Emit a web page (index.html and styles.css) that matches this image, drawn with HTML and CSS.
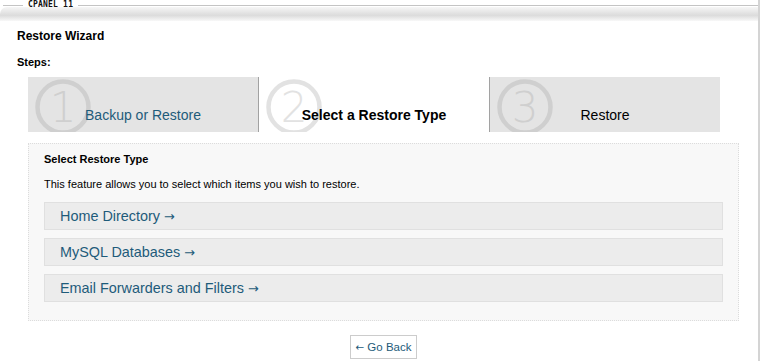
FILE: index.html
```html
<!DOCTYPE html>
<html lang="en">
<head>
    <meta charset="UTF-8">
    <title>Restore Wizard</title>
    <link rel="stylesheet" href="styles.css">
</head>
<body>
    <div class="frame">
        <div class="topbar">
            <span class="rule short"></span>
            <span class="brand">CPANEL 11</span>
            <span class="rule"></span>
        </div>
        <div class="band"></div>

        <h1>Restore Wizard</h1>
        <p class="steps-label">Steps:</p>

        <div class="steps">
            <div class="step">
                <svg class="step-num" viewBox="0 0 56 56"><circle cx="28" cy="28" r="25.5"/><text x="28" y="43">1</text></svg>
                <a href="#" class="step-label">Backup or Restore</a>
            </div>
            <div class="step current">
                <svg class="step-num" viewBox="0 0 56 56"><circle cx="28" cy="28" r="25.5"/><text x="28" y="43">2</text></svg>
                <span class="step-label">Select a Restore Type</span>
            </div>
            <div class="step">
                <svg class="step-num" viewBox="0 0 56 56"><circle cx="28" cy="28" r="25.5"/><text x="28" y="43">3</text></svg>
                <span class="step-label">Restore</span>
            </div>
        </div>

        <div class="panel">
            <h2>Select Restore Type</h2>
            <p class="desc">This feature allows you to select which items you wish to restore.</p>
            <div class="options">
                <a href="#" class="option">Home Directory <span class="arrow">&rarr;</span></a>
                <a href="#" class="option">MySQL Databases <span class="arrow">&rarr;</span></a>
                <a href="#" class="option">Email Forwarders and Filters <span class="arrow">&rarr;</span></a>
            </div>
        </div>

        <div class="back">
            <a href="#" class="back-button"><span class="arrow">&larr;</span> Go Back</a>
        </div>
    </div>
</body>
</html>
```

FILE: styles.css
```css
* {
    margin: 0;
    padding: 0;
    box-sizing: border-box;
}

body {
    font-family: "Liberation Sans", Arial, sans-serif;
    background: white;
    color: #000;
}

a {
    text-decoration: none;
}

.frame {
    width: 760px;
    height: 361px;
    border-right: 2px solid #d4d4d4;
    overflow: hidden;
}

.topbar {
    display: flex;
    align-items: center;
    height: 10px;
    padding-left: 3px;
}

.rule {
    flex: 1;
    border-top: 1px solid #c4c4c4;
}

.rule.short {
    flex: none;
    width: 20px;
}

.brand {
    font-family: "DejaVu Sans Mono", monospace;
    font-size: 8px;
    font-weight: bold;
    letter-spacing: 0.2px;
    line-height: 10px;
    padding: 0 5px;
    color: #111;
}

.band {
    height: 14px;
    margin-top: -3px;
    border-radius: 7px 0 0 0;
    background: linear-gradient(#f6f6f6 0%, #e2e2e2 45%, #dcdcdc 60%, #f8f8f8 100%);
}

h1 {
    font-size: 12px;
    font-weight: bold;
    line-height: 14px;
    margin: 8px 0 0 17px;
}

.steps-label {
    font-size: 11px;
    font-weight: bold;
    line-height: 14px;
    margin: 12px 0 0 17px;
}

.steps {
    display: flex;
    margin: 8px 0 0 28px;
    width: 692px;
}

.step {
    position: relative;
    width: 230px;
    height: 55px;
    background: #e4e4e4;
    text-align: center;
    padding-top: 28px;
    overflow: hidden;
}

.step + .step {
    width: 231px;
    border-left: 1px solid #a2a2a2;
}

.step.current {
    background: white;
}

.step-num {
    position: absolute;
    left: 7px;
    top: 2px;
    width: 56px;
    height: 56px;
}

.step-num circle {
    fill: none;
    stroke: #cfcfcf;
    stroke-width: 4.5;
}

.step-num text {
    font-family: "DejaVu Sans", sans-serif;
    font-weight: 200;
    font-size: 42px;
    fill: #cfcfcf;
    text-anchor: middle;
}

.current .step-num circle {
    stroke: #e2e2e2;
}

.current .step-num text {
    fill: #e2e2e2;
}

.step-label {
    position: relative;
    font-size: 14px;
    line-height: 20px;
    color: #000;
}

a.step-label {
    color: #1e5b7a;
}

.current .step-label {
    font-weight: bold;
}

.panel {
    margin: 11px 0 0 28px;
    width: 711px;
    height: 178px;
    background: #f8f8f8;
    border: 1px dotted #dcdcdc;
    padding: 8px 15px 0 15px;
}

h2 {
    font-size: 11px;
    font-weight: bold;
    line-height: 14px;
}

.desc {
    font-size: 11px;
    line-height: 14px;
    margin-top: 11px;
}

.options {
    display: flex;
    flex-direction: column;
    gap: 8px;
    margin-top: 11px;
}

.option {
    display: block;
    height: 28px;
    background: #ececec;
    border: 1px solid #e0e0e0;
    padding-left: 15px;
    font-size: 14.4px;
    line-height: 26px;
    color: #1e5b7a;
}

.arrow {
    font-family: "DejaVu Sans", sans-serif;
    font-size: 0.9em;
}

.back {
    width: 711px;
    margin: 14px 0 0 28px;
    text-align: center;
}

.back-button {
    display: inline-block;
    height: 24px;
    padding: 0 5px;
    border: 1px solid #cccccc;
    background: white;
    font-size: 11.5px;
    line-height: 22px;
    color: #1e5b7a;
}
```
